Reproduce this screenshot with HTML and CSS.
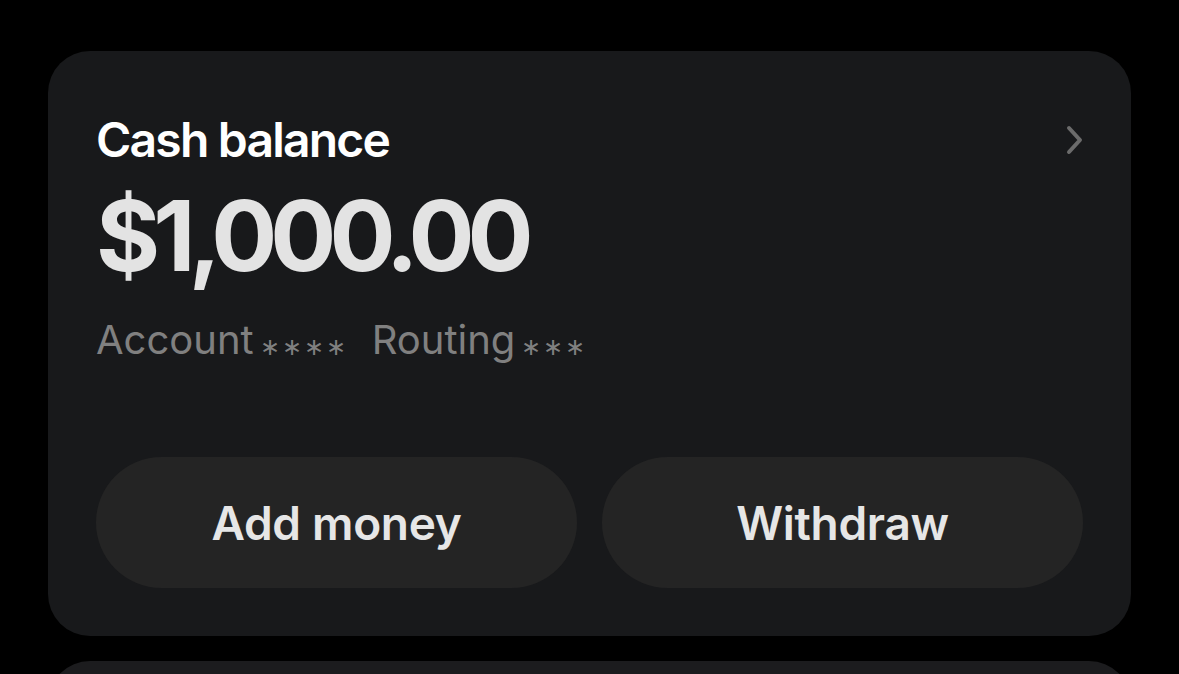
FILE: index.html
```html
<!DOCTYPE html>
<html>
<head>
<meta charset="utf-8">
<link rel="stylesheet" href="styles.css">
</head>
<body>
<div class="page">
  <section class="card">
    <div class="header">
      <h2 class="title">Cash balance</h2>
      <svg class="chev" width="20" height="32" viewBox="0 0 20 32"><path d="M4 4 L15 16 L4 28" fill="none" stroke="#6b6b6b" stroke-width="4" stroke-linecap="round" stroke-linejoin="round"/></svg>
    </div>
    <div class="amount">$1,000.00</div>
    <div class="meta">
      <span class="item">Account<span class="stars">∗∗∗∗</span></span>
      <span class="item">Routing<span class="stars">∗∗∗</span></span>
    </div>
    <div class="actions">
      <button class="btn">Add money</button>
      <button class="btn">Withdraw</button>
    </div>
  </section>
  <section class="card next"></section>
</div>
</body>
</html>
```
FILE: styles.css
```css
html, body { margin: 0; padding: 0; background: #000; }
body { font-family: Inter, "Noto Sans", sans-serif; overflow: hidden; height: 674px; }
.page { padding: 51px 48px 0 48px; display: flex; flex-direction: column; gap: 25px; }
.card { background: #18191b; border-radius: 42px; padding: 59px 48px 48px 48px; display: flex; flex-direction: column; }
.header { display: flex; justify-content: space-between; align-items: center; height: 60px; }
.title { margin: 0; font-size: 48px; font-weight: 600; color: #fff; line-height: 60px; letter-spacing: -1.8px; }
.chev { display: block; margin-right: -2px; }
.amount { font-size: 98px; font-weight: 700; color: #e3e3e3; letter-spacing: -7px; line-height: 110px; height: 110px; margin-top: 11px; }
.meta { display: flex; gap: 24px; margin-top: 24px; font-size: 40px; color: #808080; line-height: 50px; height: 50px; }
.stars { font-size: 24px; letter-spacing: 2px; margin-left: 6px; vertical-align: -1px; }
.actions { display: grid; grid-template-columns: 1fr 1fr; gap: 25px; margin-top: 92px; }
.btn { height: 131px; border: 0; border-radius: 66px; background: #242424; color: #e6e6e6; font-family: Inter, "Noto Sans", sans-serif; font-size: 46px; font-weight: 600; letter-spacing: -0.3px; padding: 0; }
.next { height: 200px; background: #1c1c1e; padding: 0; }
```
